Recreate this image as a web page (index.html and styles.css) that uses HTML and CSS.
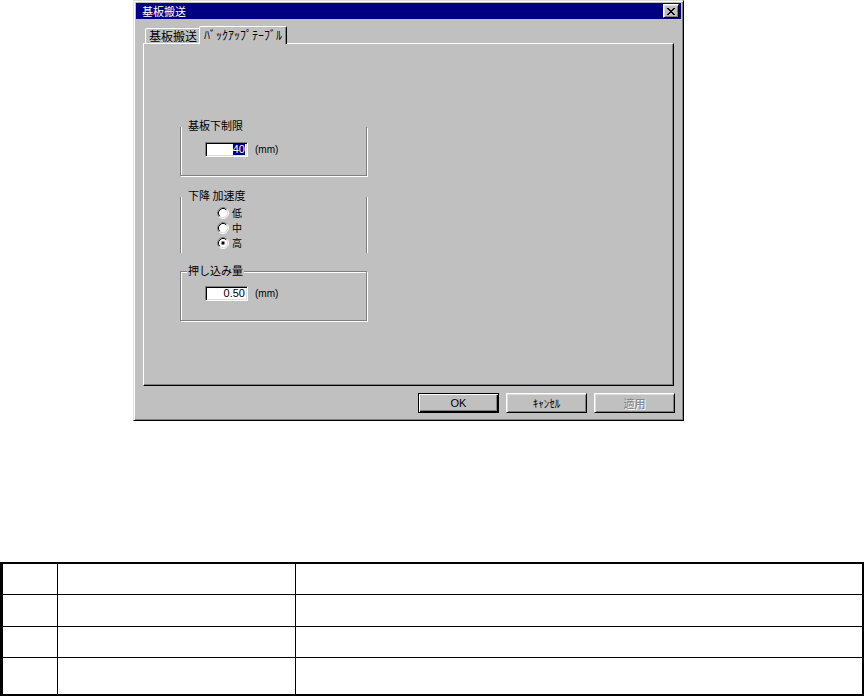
FILE: index.html
```html
<!DOCTYPE html>
<html lang="ja">
<head>
    <meta charset="UTF-8">
    <title>基板搬送</title>
    <link rel="stylesheet" href="styles.css">
</head>
<body>

    <!-- Dialog window -->
    <div class="dialog">
        <div class="titlebar">
            <span class="title">基板搬送</span>
            <span class="close-btn">
                <svg width="8" height="7" viewBox="0 0 8 7">
                    <path d="M0 0h2v1h-2zM6 0h2v1h-2zM1 1h2v1h-2zM5 1h2v1h-2zM2 2h4v1h-4zM3 3h2v1h-2zM2 4h4v1h-4zM1 5h2v1h-2zM5 5h2v1h-2zM0 6h2v1h-2zM6 6h2v1h-2z" fill="#000"/>
                </svg>
            </span>
        </div>

        <!-- Tabs -->
        <div class="tabs">
            <div class="tab">基板搬送</div>
            <div class="tab active">ﾊﾞｯｸｱｯﾌﾟﾃｰﾌﾞﾙ</div>
        </div>

        <div class="panel">
            <!-- Lower limit -->
            <div class="group group-1">
                <div class="group-label">基板下制限</div>
                <div class="field-row">
                    <span class="textbox"><span class="selected">40</span></span>
                    <span class="unit">(mm)</span>
                </div>
            </div>

            <!-- Descent acceleration -->
            <div class="group group-2">
                <div class="group-label">下降 加速度</div>
                <div class="radio-list">
                    <div class="radio">
                        <svg class="radio-icon" width="12" height="12" viewBox="0 0 12 12">
                            <circle cx="6" cy="6" r="4.5" fill="#fff"/>
                            <path d="M2.11 9.89A5.5 5.5 0 0 1 9.89 2.11" fill="none" stroke="#808080"/>
                            <path d="M9.89 2.11A5.5 5.5 0 0 1 2.11 9.89" fill="none" stroke="#fff"/>
                            <path d="M2.82 9.18A4.5 4.5 0 0 1 9.18 2.82" fill="none" stroke="#000"/>
                            <path d="M9.18 2.82A4.5 4.5 0 0 1 2.82 9.18" fill="none" stroke="#dfdfdf"/>
                        </svg>
                        <span>低</span>
                    </div>
                    <div class="radio">
                        <svg class="radio-icon" width="12" height="12" viewBox="0 0 12 12">
                            <circle cx="6" cy="6" r="4.5" fill="#fff"/>
                            <path d="M2.11 9.89A5.5 5.5 0 0 1 9.89 2.11" fill="none" stroke="#808080"/>
                            <path d="M9.89 2.11A5.5 5.5 0 0 1 2.11 9.89" fill="none" stroke="#fff"/>
                            <path d="M2.82 9.18A4.5 4.5 0 0 1 9.18 2.82" fill="none" stroke="#000"/>
                            <path d="M9.18 2.82A4.5 4.5 0 0 1 2.82 9.18" fill="none" stroke="#dfdfdf"/>
                        </svg>
                        <span>中</span>
                    </div>
                    <div class="radio">
                        <svg class="radio-icon" width="12" height="12" viewBox="0 0 12 12">
                            <circle cx="6" cy="6" r="4.5" fill="#fff"/>
                            <path d="M2.11 9.89A5.5 5.5 0 0 1 9.89 2.11" fill="none" stroke="#808080"/>
                            <path d="M9.89 2.11A5.5 5.5 0 0 1 2.11 9.89" fill="none" stroke="#fff"/>
                            <path d="M2.82 9.18A4.5 4.5 0 0 1 9.18 2.82" fill="none" stroke="#000"/>
                            <path d="M9.18 2.82A4.5 4.5 0 0 1 2.82 9.18" fill="none" stroke="#dfdfdf"/>
                            <rect x="4.5" y="4.5" width="3" height="3" fill="#000"/>
                        </svg>
                        <span>高</span>
                    </div>
                </div>
            </div>

            <!-- Push amount -->
            <div class="group group-3">
                <div class="group-label">押し込み量</div>
                <div class="field-row">
                    <span class="textbox">0.50</span>
                    <span class="unit">(mm)</span>
                </div>
            </div>
        </div>

        <!-- Dialog buttons -->
        <div class="buttons">
            <div class="btn btn-default">OK</div>
            <div class="btn">ｷｬﾝｾﾙ</div>
            <div class="btn btn-disabled">適用</div>
        </div>
    </div>

    <!-- Empty table below the dialog -->
    <div class="sheet">
        <div class="cell"></div><div class="cell"></div><div class="cell"></div>
        <div class="cell"></div><div class="cell"></div><div class="cell"></div>
        <div class="cell"></div><div class="cell"></div><div class="cell"></div>
        <div class="cell"></div><div class="cell"></div><div class="cell"></div>
    </div>

</body>
</html>
```

FILE: styles.css
```css
/* Page */
body {
    margin: 0;
    background: #fff;
    color: #000;
    font-family: "Liberation Sans", "Noto Sans CJK JP", sans-serif;
    font-size: 11px;
}

/* Dialog frame */
.dialog {
    box-sizing: border-box;
    width: 551px;
    height: 421px;
    margin-left: 133px;
    padding: 2px;
    background: #c0c0c0;
    border: 1px solid;
    border-color: #dfdfdf #000 #000 #dfdfdf;
    box-shadow: inset 1px 1px #fff, inset -1px -1px #808080;
}

/* Title bar */
.titlebar {
    display: flex;
    align-items: center;
    justify-content: space-between;
    height: 16px;
    padding: 0 2px 0 6px;
    background: #000080;
    color: #fff;
}

.title {
    font-family: "Noto Sans CJK JP", sans-serif;
    font-size: 11px;
    line-height: 16px;
}

.close-btn {
    box-sizing: border-box;
    display: flex;
    align-items: center;
    justify-content: center;
    width: 16px;
    height: 14px;
    background: #c0c0c0;
    border: 1px solid;
    border-color: #fff #000 #000 #fff;
    box-shadow: inset 1px 1px #dfdfdf, inset -1px -1px #808080;
}

/* Tabs */
.tabs {
    display: flex;
    align-items: flex-end;
    height: 17px;
    margin: 7px 0 0 9px;
}

.tab {
    box-sizing: border-box;
    width: 56px;
    height: 15px;
    border: 1px solid;
    border-bottom: 0;
    border-color: #fff #000 transparent #fff;
    border-radius: 2px 2px 0 0;
    box-shadow: inset -1px 0 #808080;
    background: #c0c0c0;
    font-family: "Noto Sans CJK JP", sans-serif;
    font-size: 12px;
    line-height: 14px;
    text-align: center;
}

.tab.active {
    position: relative;
    z-index: 1;
    width: 88px;
    height: 18px;
    margin-left: -2px;
    margin-bottom: -1px;
    line-height: 15px;
}

/* Tab page */
.panel {
    box-sizing: border-box;
    width: 531px;
    height: 343px;
    margin-left: 7px;
    padding: 83px 0 0 36px;
    border: 1px solid;
    border-color: #fff #000 #000 #fff;
    box-shadow: inset -1px -1px #808080;
}

/* Group boxes (etched frame) */
.group {
    display: flow-root;
    box-sizing: border-box;
    width: 187px;
    border: 1px solid #808080;
    box-shadow: inset 1px 1px #fff, 1px 1px #fff;
}

.group-1 {
    height: 49px;
    border-top: 0;
    box-shadow: inset 1px 0 #fff, 1px 1px #fff;
}

.group-2 {
    height: 56px;
    margin-top: 21px;
    border-top: 0;
    border-bottom: 0;
    box-shadow: inset 1px 0 #fff, 1px 0 #fff;
}

.group-3 {
    height: 50px;
    margin-top: 18px;
}

.group-label {
    width: fit-content;
    margin: -8px 0 0 6px;
    padding: 0 1px;
    background: #c0c0c0;
    font-family: "Noto Sans CJK JP", sans-serif;
    font-size: 11px;
    line-height: 13px;
}

/* Edit fields */
.field-row {
    display: flex;
    align-items: center;
    margin-top: 10px;
    padding-left: 24px;
}

.group-3 .field-row {
    margin-top: 9px;
}

.textbox {
    box-sizing: border-box;
    display: flex;
    align-items: center;
    justify-content: flex-end;
    width: 43px;
    height: 15px;
    padding-right: 2px;
    background: #fff;
    border: 1px solid;
    border-color: #808080 #fff #fff #808080;
    box-shadow: inset 1px 1px #000, inset -1px -1px #dfdfdf;
    font-size: 11px;
    line-height: 11px;
}

.selected {
    background: #000080;
    color: #fff;
}

.unit {
    margin-left: 7px;
    font-size: 10px;
}

/* Radio buttons */
.radio-list {
    margin: 3px 0 0 36px;
}

.radio {
    display: flex;
    align-items: center;
    gap: 3px;
    height: 15px;
    font-family: "Noto Sans CJK JP", sans-serif;
    font-size: 10px;
    line-height: 14px;
}

.radio-icon {
    display: block;
}

/* Dialog buttons */
.buttons {
    display: flex;
    justify-content: flex-end;
    gap: 7px;
    margin-top: 7px;
    padding-right: 6px;
}

.btn {
    box-sizing: border-box;
    display: flex;
    align-items: center;
    justify-content: center;
    width: 81px;
    height: 20px;
    border: 1px solid;
    border-color: #fff #000 #000 #fff;
    box-shadow: inset 1px 1px #dfdfdf, inset -1px -1px #808080;
    font-size: 11px;
}

.btn-default {
    border-color: #000;
    box-shadow: inset 1px 1px #fff, inset -1px -1px #000, inset -2px -2px #808080;
}

.btn-disabled {
    color: #808080;
    text-shadow: 1px 1px #fff;
    font-family: "Noto Sans CJK JP", sans-serif;
}

/* Empty table */
.sheet {
    box-sizing: border-box;
    display: grid;
    grid-template-columns: 54px 238px 1fr;
    grid-template-rows: 30px 32px 31px 37px;
    width: 864px;
    margin-top: 141px;
    border: 2px solid #000;
    border-left-width: 3px;
}

.cell {
    box-sizing: border-box;
    border-top: 1px solid #000;
    border-left: 1px solid #000;
}

.cell:nth-child(3n+1) {
    border-left: 0;
}

.cell:nth-child(-n+3) {
    border-top: 0;
}
```
